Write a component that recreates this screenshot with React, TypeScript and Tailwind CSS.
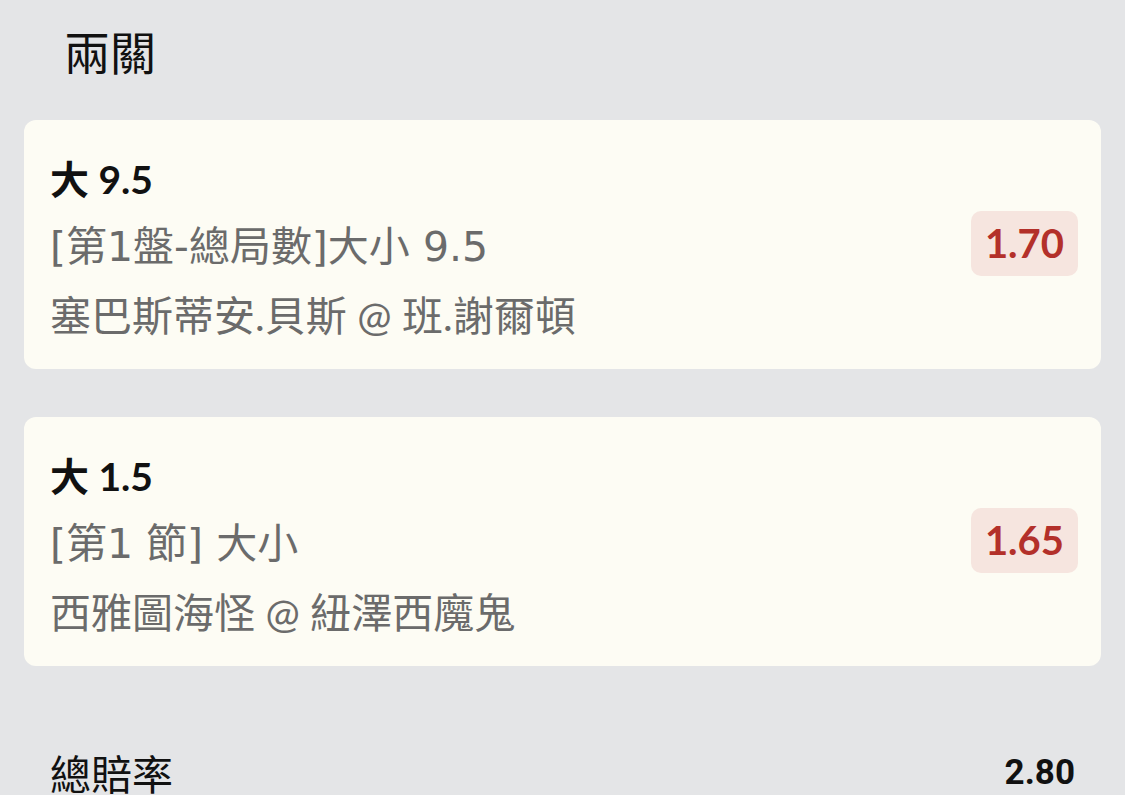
import React from "react";

const latin = "font-['Lato','Noto_Sans_CJK_TC',sans-serif]";
const wide = "font-['DejaVu_Sans','Noto_Sans_CJK_TC',sans-serif]";

type Leg = { pick: string; market: string; match: string; odds: string };

const legs: Leg[] = [
  { pick: "大 9.5", market: "[第1盤-總局數]大小 9.5", match: "塞巴斯蒂安.貝斯 @ 班.謝爾頓", odds: "1.70" },
  { pick: "大 1.5", market: "[第1 節] 大小", match: "西雅圖海怪 @ 紐澤西魔鬼", odds: "1.65" },
];

function Card({ leg }: { leg: Leg }) {
  return (
    <div className="mx-[24px] flex items-center justify-between rounded-[12px] bg-[#fdfcf4] pl-[26px] pr-[23px] pt-[25px] pb-[18px]">
      <div className="flex flex-col">
        <div className={`${latin} text-[39px] font-bold leading-[68px] text-[#111111]`}>{leg.pick}</div>
        <div className={`${wide} text-[41px] font-normal leading-[68px] text-[#6b6b6b]`}>{leg.market}</div>
        <div className={`${latin} text-[41px] font-normal leading-[70px] text-[#6b6b6b]`}>{leg.match}</div>
      </div>
      <div className="mb-[10px] flex h-[65px] items-center rounded-[10px] bg-[#f6e5df] px-[14px]">
        <span className={`${latin} text-[40px] font-bold leading-none text-[#b3302a]`}>{leg.odds}</span>
      </div>
    </div>
  );
}

export default function App() {
  return (
    <div className="min-h-[795px] w-full overflow-hidden bg-[#e4e5e7]">
      <div className="flex h-[100px] items-center pl-[64px]">
        <span className="font-['Noto_Sans_CJK_TC',sans-serif] text-[46px] leading-none text-[#111111]">兩關</span>
      </div>
      <div className="mt-[20px] flex flex-col gap-[48px]">
        {legs.map((l) => (
          <Card key={l.odds} leg={l} />
        ))}
      </div>
      <div className="mt-[76px] flex h-[60px] items-center justify-between pl-[50px] pr-[50px]">
        <span className="font-['Noto_Sans_CJK_TC',sans-serif] text-[41px] leading-none text-[#111111]">總賠率</span>
        <span className="font-['Roboto',sans-serif] text-[35px] font-bold leading-none text-[#111111]">2.80</span>
      </div>
    </div>
  );
}
